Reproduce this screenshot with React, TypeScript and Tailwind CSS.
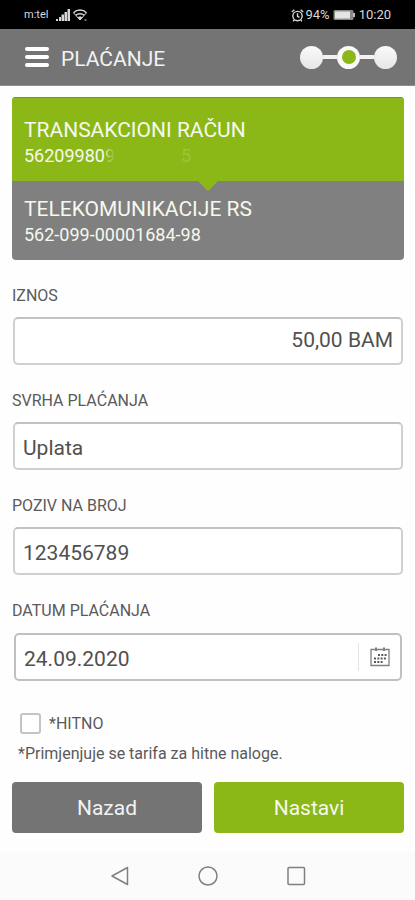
import type { ReactNode } from "react";

function StatusBar() {
  return (
    <div className="flex h-[29px] items-center justify-between bg-black pt-px pl-6 pr-6 text-[13px] text-[#d8d8d8]">
      <div className="flex items-center">
        <span className="text-[11px]">m:tel</span>
        <svg className="ml-2 h-3 w-[14px]" viewBox="0 0 14 12" fill="#d8d8d8" aria-hidden="true">
          <path d="M0 10h2v2H0zM3 8h2v4H3zM5.500 5.500h2.500V12H5.500zM8.500 3H11v9H8.500zM11.500 0H14v12h-2.500z" />
        </svg>
        <svg className="ml-[2px] h-3 w-4" viewBox="0 0 16 12" fill="none" stroke="#d8d8d8" strokeWidth="1.500" aria-hidden="true">
          <path d="M1.500 3.800C5 .2 11 .2 14.500 3.800" />
          <path d="M3.800 6.300c2.300-2.200 6-2.200 8.400 0" />
          <path d="M1.500 3.800L8 11l6.500-7.200" strokeWidth="1" />
          <path d="M6 8.600c1.200-1 2.800-1 4 0L8 11z" fill="#d8d8d8" strokeWidth="0.800" />
          <path d="M12.500 11h2" strokeWidth="1" />
        </svg>
      </div>
      <div className="flex items-center">
        <svg className="h-[13px] w-[13px]" viewBox="0 0 12 12" fill="none" stroke="#d8d8d8" strokeWidth="1.300" aria-hidden="true">
          <circle cx="6" cy="6.500" r="4.300" />
          <path d="M6 4v2.700l1.800 1M.8 2.700l2.300-2M11.200 2.700l-2.300-2M3 10l-1 1.500M9 10l1 1.500" />
        </svg>
        <span className="ml-px">94%</span>
        <svg className="ml-[3px] h-3 w-[22px]" viewBox="0 0 22 12" aria-hidden="true">
          <rect x="0.500" y="1" width="20" height="10" rx="1.500" fill="#8a8a8a" />
          <rect x="2" y="2.500" width="15" height="7" fill="#e4e4e4" />
          <rect x="20" y="4" width="2" height="4" fill="#bdbdbd" />
        </svg>
        <span className="ml-1">10:20</span>
      </div>
    </div>
  );
}

function Steps() {
  return (
    <div className="flex items-center" role="img" aria-label="Korak 2 od 3">
      <span className="size-[23px] rounded-full bg-linear-to-b from-[#fafafa] to-[#e6e6e6]" />
      <span className="h-1 w-[14px] bg-[#f2f2f2]" />
      <span className="flex size-[23px] items-center justify-center rounded-full bg-[#fafafa]">
        <span className="size-[14px] rounded-full bg-[#8bb817]" />
      </span>
      <span className="h-1 w-[14px] bg-[#f2f2f2]" />
      <span className="size-[23px] rounded-full bg-linear-to-b from-[#fafafa] to-[#e6e6e6]" />
    </div>
  );
}

function AppHeader() {
  return (
    <header className="flex h-[57px] items-center justify-between border-b border-[#8d8d8d] bg-[#747474] pr-[18px] pl-[25px]">
      <div className="flex items-center gap-3">
        <button type="button" aria-label="Meni" className="flex w-6 flex-col gap-1">
          <span className="h-1 rounded-xs bg-white" />
          <span className="h-1 rounded-xs bg-white" />
          <span className="h-1 rounded-xs bg-white" />
        </button>
        <h1 className="pt-[3px] text-[21px] leading-6 text-[#f2f2f2]">PLAĆANJE</h1>
      </div>
      <Steps />
    </header>
  );
}

function Accounts() {
  return (
    <section className="overflow-hidden rounded-[4px] bg-[#808080] text-[#f6f8ee]">
      <div className="relative h-[84px] border-t border-[#7e8a52] bg-[#8bb817] px-3 pt-5">
        <p className="text-[21px] leading-6">TRANSAKCIONI RAČUN</p>
        <p className="flex pt-[2px] text-[18px] leading-6">
          <span>56209980</span>
          <span className="bg-linear-to-r from-[#d5e5a8] to-[#8bb817] bg-clip-text text-transparent">9</span>
          <span className="ml-[66px] text-[#9cc53c]">5</span>
        </p>
        <svg className="absolute top-full left-1/2 h-[10px] w-5 -translate-x-1/2" viewBox="0 0 20 10" aria-hidden="true">
          <path d="M0 0h20L10 10z" fill="#8bb817" />
        </svg>
      </div>
      <div className="h-[79px] px-3 pt-4">
        <p className="text-[21px] leading-6">TELEKOMUNIKACIJE RS</p>
        <p className="pt-[2px] text-[18px] leading-6">562-099-00001684-98</p>
      </div>
    </section>
  );
}

function Field({ id, label, children }: { id: string; label: string; children: ReactNode }) {
  return (
    <div>
      <label htmlFor={id} className="mb-[11px] block text-[16px] leading-5 text-[#5a5a5a]">
        {label}
      </label>
      <div className="px-px">{children}</div>
    </div>
  );
}

const inputStyle =
  "block h-12 w-full rounded-[5px] border-2 border-[#d0d0d0] border-t-[#c2c2c2] bg-white px-2 text-[21px] text-[#505050] outline-none";

export default function App() {
  return (
    <div className="flex min-h-screen flex-col bg-[#fefefe] font-[Roboto,sans-serif]">
      <StatusBar />
      <AppHeader />
      <main className="flex-1 pt-[11px] pr-[11px] pl-3">
        <Accounts />
        <form id="placanje" className="pt-[26px]" onSubmit={(e) => e.preventDefault()}>
          <div className="flex flex-col gap-[26px]">
            <Field id="iznos" label="IZNOS">
              <input id="iznos" defaultValue="50,00 BAM" className={`${inputStyle} pb-[2px] text-right`} />
            </Field>
            <Field id="svrha" label="SVRHA PLAĆANJA">
              <input id="svrha" defaultValue="Uplata" className={`${inputStyle} pt-1`} />
            </Field>
            <Field id="poziv" label="POZIV NA BROJ">
              <input id="poziv" defaultValue="123456789" className={`${inputStyle} pt-1`} />
            </Field>
            <Field id="datum" label="DATUM PLAĆANJA">
              <div className="mx-px mt-3 flex h-12 items-center rounded-[5px] border-2 border-[#c0c0c0] bg-white">
                <input
                  id="datum"
                  defaultValue="24.09.2020"
                  className="h-full min-w-0 flex-1 px-2 pt-1 text-[21px] text-[#505050] outline-none"
                />
                <button
                  type="button"
                  aria-label="Izaberi datum"
                  className="flex h-7 w-[42px] items-center justify-center border-l border-[#e4e4e4]"
                >
                  <svg className="size-5" viewBox="0 0 20 20" fill="none" stroke="#808080" aria-hidden="true">
                    <path d="M1 2.500h18v16H1z" strokeWidth="1.300" />
                    <path d="M6 .5v3.500M14 .5v3.500" strokeWidth="2" />
                    <path
                      d="M8 8h9M4 11.500h13M4 15h9"
                      stroke="#5a5a5a"
                      strokeWidth="2"
                      strokeDasharray="2 1.300"
                    />
                  </svg>
                </button>
              </div>
            </Field>
          </div>
          <div className="flex items-center gap-2 pt-8 pl-2">
            <input
              id="hitno"
              type="checkbox"
              className="size-[21px] appearance-none rounded-[3px] border-2 border-[#c4c4c4] bg-white checked:bg-[#8bb817]"
            />
            <label htmlFor="hitno" className="text-[16px] leading-5 text-[#5a5a5a]">
              *HITNO
            </label>
          </div>
          <p className="pt-[10px] pl-[6px] text-[16px] leading-5 text-[#5a5a5a]">*Primjenjuje se tarifa za hitne naloge.</p>
        </form>
        <div className="grid grid-cols-2 gap-3 pt-[18px]">
          <button type="button" className="h-[51px] rounded-[4px] bg-[#747474] pt-[2px] text-[21px] text-[#f2f2f2]">
            Nazad
          </button>
          <button
            type="submit"
            form="placanje"
            className="h-[51px] rounded-[4px] bg-[#8bb817] pt-[2px] text-[21px] text-[#f6f8ee]"
          >
            Nastavi
          </button>
        </div>
      </main>
      <nav className="flex h-12 items-center justify-center gap-[68px] bg-[#fbfbfb]">
        <button type="button" aria-label="Nazad">
          <svg className="size-5" viewBox="0 0 20 20" fill="none" stroke="#808080" strokeWidth="1.500" strokeLinejoin="round">
            <path d="M17.500 1.500v17L2 10z" />
          </svg>
        </button>
        <button type="button" aria-label="Početna">
          <svg className="size-5" viewBox="0 0 20 20" fill="none" stroke="#808080" strokeWidth="1.500">
            <circle cx="10" cy="10" r="9" />
          </svg>
        </button>
        <button type="button" aria-label="Nedavne aplikacije">
          <svg className="size-5" viewBox="0 0 20 20" fill="none" stroke="#808080" strokeWidth="1.500">
            <rect x="2" y="1.500" width="16.500" height="17" rx="1" />
          </svg>
        </button>
      </nav>
    </div>
  );
}
